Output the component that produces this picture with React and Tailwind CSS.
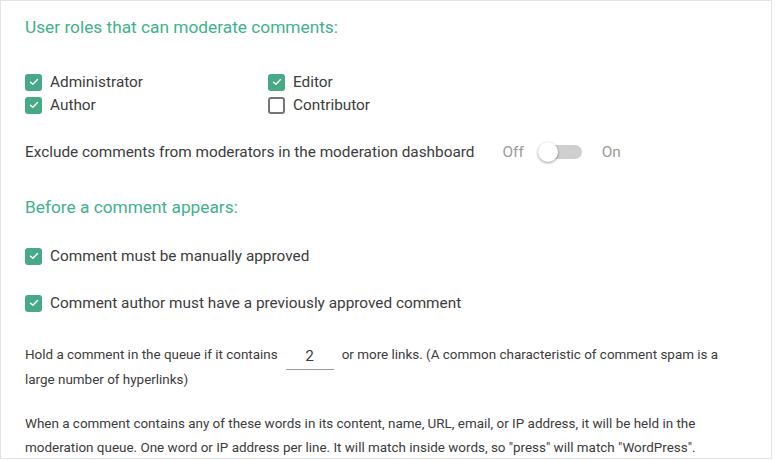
import React, { useState } from "react";

const Check = ({ checked }) => (
  <span
    className={`flex h-[17px] w-[17px] shrink-0 items-center justify-center rounded-[3px] ${
      checked ? "bg-[#47a985]" : "border-2 border-[#757575] bg-white"
    }`}
  >
    {checked && (
      <svg width="10" height="8" viewBox="0 0 10 8" fill="none">
        <path d="M1.5 4.2 L3.9 6.3 L8.5 1.6" stroke="white" strokeWidth="1.4" strokeLinecap="round" strokeLinejoin="round" />
      </svg>
    )}
  </span>
);

const CheckRow = ({ checked, label }) => (
  <label className="flex items-center gap-[8px] text-[15.35px] text-[#3c3c3c]">
    <Check checked={checked} />
    <span>{label}</span>
  </label>
);

const App = () => {
  const [exclude] = useState(false);

  return (
    <div className="h-[461px] w-[775px] bg-white font-['Roboto',sans-serif]">
      <div className="h-[459px] w-[772px] border border-[#e3e3e3] px-6 pt-[14px]">
        {/* Roles */}
        <h2 className="text-[17.3px] leading-[24px] text-[#3fb28b]">User roles that can moderate comments:</h2>
        <div className="mt-[33px] grid w-[400px] grid-cols-[243px_1fr] gap-y-[3px] leading-[20px]">
          <CheckRow checked label="Administrator" />
          <CheckRow checked label="Editor" />
          <CheckRow checked label="Author" />
          <CheckRow checked={false} label="Contributor" />
        </div>

        <div className="mt-[27px] flex items-center text-[15.35px] leading-[20px] text-[#3c3c3c]">
          <span>Exclude comments from moderators in the moderation dashboard</span>
          <span className="ml-[28px] text-[#9a9a9a]">Off</span>
          <span className="relative ml-[14px] mr-[20px] h-[14px] w-[44px] rounded-full bg-[#cfcfcf]">
            <span
              className={`absolute top-[-3px] h-5 w-5 rounded-full bg-white shadow-[0_1px_3px_rgba(0,0,0,0.4)] ${
                exclude ? "left-[24px]" : "left-0"
              }`}
            ></span>
          </span>
          <span className="text-[#9a9a9a]">On</span>
        </div>

        {/* Before a comment appears */}
        <h2 className="mt-[33px] text-[17.3px] leading-[24px] text-[#3fb28b]">Before a comment appears:</h2>
        <div className="mt-[27px] leading-[20px]">
          <CheckRow checked label="Comment must be manually approved" />
        </div>
        <div className="mt-[27px] leading-[20px]">
          <CheckRow checked label="Comment author must have a previously approved comment" />
        </div>

        <p className="mt-[29px] text-[13.45px] leading-[25px] text-[#3c3c3c]">
          Hold a comment in the queue if it contains
          <span className="relative mx-[8px] inline-block h-[20px] w-[48px] text-center align-[-2px] text-[15.35px] leading-[20px]">
            2
            <span className="absolute left-0 right-0 top-[23px] h-px bg-[#9a9a9a]"></span>
          </span>
          or more links. (A common characteristic of comment spam is a large number of hyperlinks)
        </p>

        <p className="mt-[20px] text-[13.45px] leading-[24px] text-[#3c3c3c]">
          When a comment contains any of these words in its content, name, URL, email, or IP address, it will be held in the
          moderation queue. One word or IP address per line. It will match inside words, so "press" will match "WordPress".
        </p>
      </div>
    </div>
  );
};

export default App;
